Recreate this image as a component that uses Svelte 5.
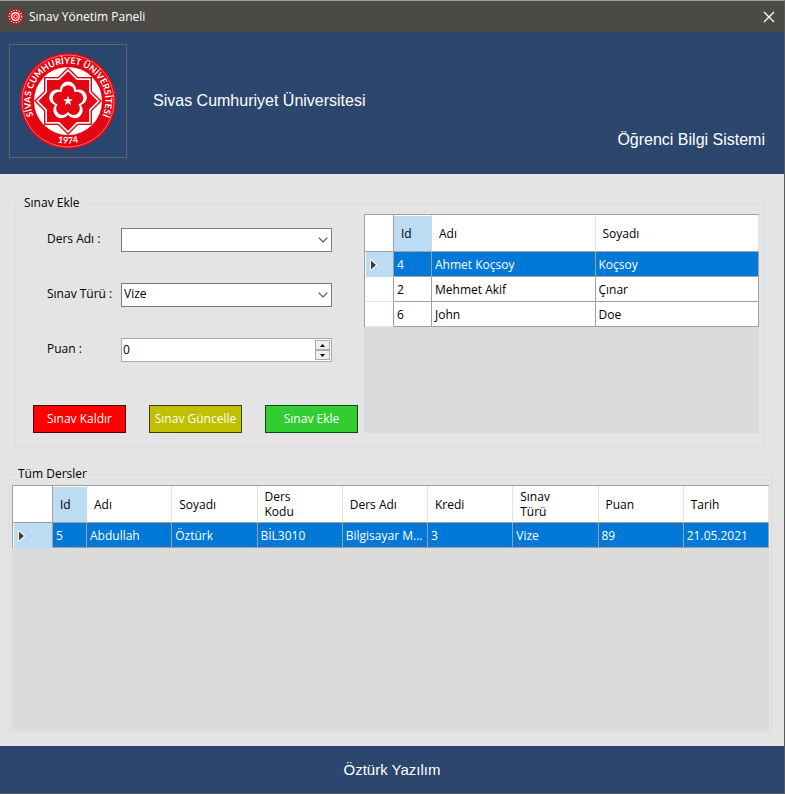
<script>
  const courses = ['', 'Bilgisayar Mimarisi', 'Veri Yapıları'];
  const examTypes = ['Vize', 'Final', 'Bütünleme'];

  const studentColumns = ['Id', 'Adı', 'Soyadı'];
  const students = [
    ['4', 'Ahmet Koçsoy', 'Koçsoy'],
    ['2', 'Mehmet Akif', 'Çınar'],
    ['6', 'John', 'Doe'],
  ];

  const examColumns = ['Id', 'Adı', 'Soyadı', 'Ders Kodu', 'Ders Adı', 'Kredi', 'Sınav Türü', 'Puan', 'Tarih'];
  const exams = [
    ['5', 'Abdullah', 'Öztürk', 'BİL3010', 'Bilgisayar M...', '3', 'Vize', '89', '21.05.2021'],
  ];

  let course = $state('');
  let examType = $state('Vize');
  let score = $state(0);
  let selectedStudent = $state(0);
  let selectedExam = $state(0);

  const petals = [0, 72, 144, 216, 288];
</script>

{#snippet emblem()}
  <circle r="48" fill="#e30613" />
  <circle r="46" fill="none" stroke="#f59aa0" stroke-width="0.7" />
  <circle r="34" fill="#fff" />
  <g fill="none" stroke="#e30613" stroke-width="2">
    <rect x="-23" y="-23" width="46" height="46" />
    <rect x="-23" y="-23" width="46" height="46" transform="rotate(45)" />
  </g>
  <g fill="#fff">
    <rect x="-22.6" y="-22.6" width="45.2" height="45.2" />
    <rect x="-22.6" y="-22.6" width="45.2" height="45.2" transform="rotate(45)" />
  </g>
  <g fill="#e30613">
    <rect x="-21" y="-21" width="42" height="42" />
    <rect x="-21" y="-21" width="42" height="42" transform="rotate(45)" />
  </g>
  {#each petals as angle}
    <circle cy="-11.4" r="8" fill="#fff" transform="rotate({angle})" />
  {/each}
  {#each petals as angle}
    <circle cy="-9.3" r="6.4" fill="#e30613" transform="rotate({angle})" />
  {/each}
  <path
    fill="#fff"
    d="M0-5.2 1.2-1.7 4.9-1.6 2 .6 3.1 4.2 0 2.1-3.1 4.2-2 .6-4.9-1.6-1.2-1.7Z"
  />
{/snippet}

{#snippet grid(columns, rows, selected, select)}
  <thead>
    <tr>
      <th class="stub"></th>
      {#each columns as name, i}
        <th class:current={i === 0} scope="col">{name}</th>
      {/each}
    </tr>
  </thead>
  <tbody>
    {#each rows as row, r}
      <tr class:selected={r === selected} onclick={() => select(r)}>
        <th class="stub">
          {#if r === selected}
            <svg width="8" height="12" viewBox="0 0 8 12" aria-hidden="true">
              <path d="M1 1.5 6 6 1 10.5Z" fill="#3c3c3c" stroke="#fff" stroke-width="2" paint-order="stroke" />
            </svg>
          {/if}
        </th>
        {#each row as cell}
          <td>{cell}</td>
        {/each}
      </tr>
    {/each}
  </tbody>
{/snippet}

<div class="window" lang="tr">
  <div class="titlebar">
    <svg class="icon" viewBox="-48 -48 96 96" aria-hidden="true">
      <circle r="48" fill="#e30613" />
      <circle r="40" fill="none" stroke="#fff" stroke-width="7" stroke-dasharray="8 9" />
      <circle r="29" fill="#fff" />
      <circle r="20" fill="#e30613" />
      <circle r="11" fill="none" stroke="#fff" stroke-width="6" />
    </svg>
    <span>Sınav Yönetim Paneli</span>
    <button class="close" aria-label="Kapat">
      <svg width="12" height="12" viewBox="0 0 12 12" aria-hidden="true">
        <path d="M1 1 11 11M11 1 1 11" stroke="#fff" stroke-width="1.3" />
      </svg>
    </button>
  </div>

  <header>
    <div class="logo">
      <svg width="98" height="98" viewBox="-49 -49 98 98" role="img" aria-label="Sivas Cumhuriyet Üniversitesi">
        <defs>
          <path id="arc-top" d="M0 37.4A37.4 37.4 0 0 1 0-37.4A37.4 37.4 0 0 1 0 37.4" />
          <path id="arc-bottom" d="M-42.6 0A42.6 42.6 0 0 0 42.6 0" />
        </defs>
        {@render emblem()}
        <g class="seal">
          <text><textPath href="#arc-top" startOffset="50%">SİVAS CUMHURİYET ÜNİVERSİTESİ</textPath></text>
          <text><textPath href="#arc-bottom" startOffset="50%">1974</textPath></text>
        </g>
      </svg>
    </div>
    <h1>Sivas Cumhuriyet Üniversitesi</h1>
    <h2>Öğrenci Bilgi Sistemi</h2>
  </header>

  <main>
    <fieldset class="entry">
      <legend>Sınav Ekle</legend>
      <div class="columns">
        <form onsubmit={(e) => e.preventDefault()}>
          <div class="field">
            <label for="course">Ders Adı :</label>
            <div class="combo">
              <select id="course" bind:value={course}>
                {#each courses as c}<option value={c}>{c}</option>{/each}
              </select>
              <svg width="10" height="6" viewBox="0 0 10 6" aria-hidden="true">
                <path d="M.7.7 5 5 9.3.7" fill="none" stroke="#555" stroke-width="1.2" />
              </svg>
            </div>
          </div>
          <div class="field">
            <label for="type">Sınav Türü :</label>
            <div class="combo">
              <select id="type" bind:value={examType}>
                {#each examTypes as t}<option value={t}>{t}</option>{/each}
              </select>
              <svg width="10" height="6" viewBox="0 0 10 6" aria-hidden="true">
                <path d="M.7.7 5 5 9.3.7" fill="none" stroke="#555" stroke-width="1.2" />
              </svg>
            </div>
          </div>
          <div class="field">
            <label for="score">Puan :</label>
            <div class="spin">
              <input id="score" type="number" min="0" max="100" bind:value={score} />
              <div class="steps">
                <button type="button" aria-label="Artır" onclick={() => (score = Math.min(100, score + 1))}>
                  <svg width="5" height="3" viewBox="0 0 5 3" aria-hidden="true"><path d="M0 3 2.5 0 5 3Z" /></svg>
                </button>
                <button type="button" aria-label="Azalt" onclick={() => (score = Math.max(0, score - 1))}>
                  <svg width="5" height="3" viewBox="0 0 5 3" aria-hidden="true"><path d="M0 0 2.5 3 5 0Z" /></svg>
                </button>
              </div>
            </div>
          </div>
          <div class="actions">
            <button class="remove">Sınav Kaldır</button>
            <button class="update">Sınav Güncelle</button>
            <button class="add">Sınav Ekle</button>
          </div>
        </form>
        <div class="gridview">
          <table class="students">
            <colgroup><col class="c-stub" /><col class="c-id" /><col /><col /></colgroup>
            {@render grid(studentColumns, students, selectedStudent, (r) => (selectedStudent = r))}
          </table>
        </div>
      </div>
    </fieldset>

    <fieldset class="all">
      <legend>Tüm Dersler</legend>
      <div class="gridview">
        <table class="exams">
          <colgroup>
            <col class="c-stub" /><col class="c-id" />
            <col /><col /><col /><col /><col /><col /><col /><col />
          </colgroup>
          {@render grid(examColumns, exams, selectedExam, (r) => (selectedExam = r))}
        </table>
      </div>
    </fieldset>
  </main>

  <footer>Öztürk Yazılım</footer>
</div>

<style>
  .window {
    box-sizing: border-box;
    min-height: 100vh;
    display: flex;
    flex-direction: column;
    border: 1px solid #5c5b59;
    border-top-color: #9d9d9b;
    border-left: 0;
    background: #e4e4e4;
    color: #000;
    font: 12px/16px 'Open Sans', 'Noto Sans', sans-serif;
  }

  button,
  select,
  input {
    box-sizing: border-box;
    margin: 0;
    padding: 0;
    font: inherit;
    color: inherit;
  }

  .titlebar {
    display: flex;
    align-items: center;
    height: 31px;
    padding: 0 9px 0 8px;
    background: #4c4a47;
    color: #fff;
  }

  .icon {
    width: 15px;
    height: 15px;
    margin-right: 6px;
  }

  .close {
    display: flex;
    margin-left: auto;
    border: 0;
    background: none;
  }

  header {
    display: flex;
    align-items: center;
    padding: 12px 19px 16px 9px;
    background: #2c466e;
    color: #fff;
  }

  .logo {
    box-sizing: border-box;
    width: 118px;
    height: 114px;
    display: flex;
    align-items: center;
    justify-content: center;
    border: 1px solid #646464;
    background: #29466f;
  }

  .seal {
    fill: #fff;
    font: bold 9px Lato, sans-serif;
    text-anchor: middle;
  }

  h1,
  h2,
  footer {
    margin: 0;
    font: 16px/20px 'Liberation Sans', Arial, sans-serif;
  }

  h1 {
    margin-left: 26px;
  }

  h2 {
    margin: 0 0 8px auto;
    align-self: flex-end;
  }

  main {
    flex: 1;
    display: flex;
    flex-direction: column;
    gap: 19px;
    padding: 21px 12px 14px 9px;
  }

  fieldset {
    min-width: 0;
    margin: 0;
    border: 1px solid #dcdcdc;
  }

  legend {
    padding: 0 2px;
  }

  .entry {
    margin: 0 7px 0 6px;
    padding: 3px 5px 13px 6px;
  }

  .columns {
    display: flex;
    gap: 6px;
  }

  form {
    flex: none;
    padding: 14px 0 0 11px;
  }

  .field {
    display: flex;
    align-items: center;
    height: 24px;
    margin-bottom: 31px;
  }

  .field label {
    width: 74px;
    margin-left: 14px;
    padding-bottom: 2px;
  }

  .combo {
    position: relative;
    width: 211px;
  }

  .combo svg {
    position: absolute;
    right: 4px;
    top: 9px;
    pointer-events: none;
  }

  select {
    display: block;
    width: 100%;
    height: 24px;
    padding: 0 18px 2px 2px;
    border: 1px solid #7a7a7a;
    border-radius: 0;
    background: #fff;
    appearance: none;
  }

  .spin {
    box-sizing: border-box;
    display: flex;
    width: 211px;
    height: 24px;
    padding: 1px;
    border: 1px solid #ababab;
    background: #fff;
  }

  .spin input {
    flex: 1;
    min-width: 0;
    height: 18px;
    border: 0;
    background: none;
    appearance: textfield;
  }

  .steps {
    display: flex;
    flex-direction: column;
    width: 15px;
  }

  .steps button {
    flex: 1;
    display: flex;
    align-items: center;
    justify-content: center;
    border: 1px solid #acacac;
    background: #efefef;
  }

  .actions {
    display: flex;
    gap: 23px;
    padding-top: 12px;
  }

  .actions button {
    width: 93px;
    height: 28px;
    border: 1px solid;
    color: #fff;
    white-space: nowrap;
  }

  .actions .remove {
    border-color: #500;
    background: #f00;
  }

  .actions .update {
    border-color: #404000;
    background: #c0c000;
  }

  .actions .add {
    border-color: #114411;
    background: #32cd32;
  }

  .gridview {
    flex: 1;
    min-width: 0;
    background: #dbdbdb;
  }

  table {
    width: 100%;
    table-layout: fixed;
    border-collapse: separate;
    border-spacing: 0;
    border-top: 1px solid #a0a0a0;
    border-left: 1px solid #a0a0a0;
  }

  .students .c-stub {
    width: 29px;
  }

  .students .c-id {
    width: 38px;
  }

  .exams .c-stub {
    width: 40px;
  }

  .exams .c-id {
    width: 34px;
  }

  th,
  td {
    box-sizing: border-box;
    height: 25px;
    padding: 2px 0 0 3px;
    overflow: hidden;
    border-right: 1px solid #a0a0a0;
    border-bottom: 1px solid #a0a0a0;
    background: #fff;
    font-weight: normal;
    text-align: left;
    text-overflow: ellipsis;
    white-space: nowrap;
  }

  thead th {
    height: 37px;
    padding: 0 26px 0 7px;
    border-right-color: #e4e4e4;
    line-height: 15px;
    white-space: normal;
  }

  thead th.current {
    padding-right: 0;
    border-right-color: #bcdcf4;
    background: #bcdcf4;
    box-shadow: inset 0 1px #fff;
  }

  th.stub {
    padding: 2px 0 0 5px;
    border-right-color: #a0a0a0;
  }

  tbody th.stub {
    border-bottom-color: #e4e4e4;
  }

  th.stub svg {
    display: block;
  }

  .selected td {
    background: #0078d7;
    color: #fff;
  }

  .selected th.stub {
    border-bottom-color: #bcdcf4;
    background: #bcdcf4;
    box-shadow: inset 1px 0 #fff;
  }

  .all {
    flex: 1;
    padding: 3px 2px 1px;
  }

  .all legend {
    margin-left: 4px;
  }

  .all .gridview {
    min-height: 245px;
  }

  footer {
    padding: 14px 0 13px;
    background: #2c466e;
    color: #fff;
    font-size: 15px;
    text-align: center;
  }
</style>
